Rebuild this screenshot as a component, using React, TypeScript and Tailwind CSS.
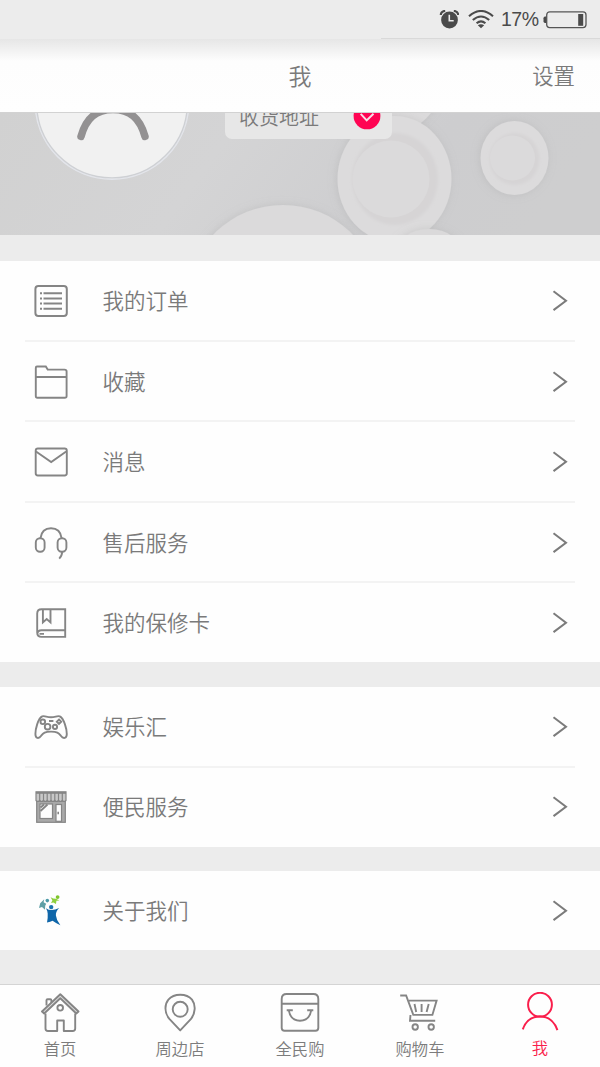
import type { ReactNode } from "react";

const OrderIcon = () => (
  <svg width="36" height="36" viewBox="0 0 36 36" fill="none" stroke="#858585" strokeWidth="2">
    <rect x="2.4" y="2.9" width="31.4" height="30.2" rx="3" />
    <path d="M10.5 10.2H29M10.5 15.4H29M10.5 20.6H29M10.5 25.8H29M7 10.2h2M7 15.4h2M7 20.6h2M7 25.8h2" />
  </svg>
);

const FolderIcon = () => (
  <svg width="36" height="36" viewBox="0 0 36 36" fill="none" stroke="#858585" strokeWidth="1.9">
    <path d="M2.8 32V4Q2.8 2.5 4 2.5H12.8L14.7 5.6H31.5Q33.6 5.6 33.6 7.5V32Q33.6 33.8 31.8 33.8H4.3Q2.8 33.8 2.8 32ZM2.8 13H33.6" />
  </svg>
);

const MailIcon = () => (
  <svg width="36" height="36" viewBox="0 0 36 36" fill="none" stroke="#858585" strokeWidth="1.9">
    <rect x="2.7" y="4.5" width="31.1" height="27" rx="2.2" />
    <path d="M3 7.5L18.2 18L33.2 7.5" />
  </svg>
);

const HeadsetIcon = () => (
  <svg width="36" height="36" viewBox="0 0 36 36" fill="none" stroke="#858585" strokeWidth="1.9">
    <path d="M7.4 13.3C8.4 6.5 12.4 3.3 18 3.3S27.7 6.5 28.7 13.3" />
    <rect x="2.8" y="13.3" width="8.8" height="13.4" rx="4.2" />
    <rect x="24.6" y="13.3" width="8.8" height="13.4" rx="4.2" />
    <path d="M29.2 26.7Q29 31 26.2 33.6" />
  </svg>
);

const BookIcon = () => (
  <svg width="36" height="36" viewBox="0 0 36 36" fill="none" stroke="#858585" strokeWidth="1.9">
    <path d="M32.2 4.2V31.9H8.5Q4.2 31.7 4.2 27.5V8.5Q4.2 4.2 8.5 4.2ZM32.2 25.3H8.5Q4.6 25.3 4.4 29M9.9 4.5V17.4L13.7 14L17.5 17.4V4.5M6.5 28.9H11" />
  </svg>
);

const GamepadIcon = () => (
  <svg width="36" height="36" viewBox="0 0 36 36" fill="none" stroke="#858585" strokeWidth="1.9">
    <path d="M9.2 7.4C11.5 6.4 13.7 8.3 18 8.3S24.5 6.4 26.8 7.4C31 9.5 33.8 20 33.8 25C33.8 29.5 30.3 30.2 27.8 26.7C25.5 23.7 24.2 22.6 18 22.6S10.5 23.7 8.2 26.7C5.7 30.2 2.4 29.5 2.4 25C2.4 20 5 9.5 9.2 7.4Z" />
    <circle cx="9.8" cy="12.8" r="2.3" />
    <circle cx="14.6" cy="17.7" r="2.8" />
    <circle cx="22" cy="17.9" r="2.1" />
    <path d="M26 10.5l2.2 2.2-2.2 2.2-2.2-2.2ZM16 12h4.4" />
  </svg>
);

const ShopIcon = () => (
  <svg width="36" height="36" viewBox="0 0 36 36" fill="none" stroke="#858585" strokeWidth="1.2">
    <rect x="3.7" y="12" width="28.6" height="21.3" fill="#a9a9a9" />
    <path d="M3 2.8H33V11.5Q31 13.5 29.3 11.5Q27.4 13.5 25.5 11.5Q23.6 13.5 21.8 11.5Q19.9 13.5 18 11.5Q16.1 13.5 14.2 11.5Q12.4 13.5 10.5 11.5Q8.6 13.5 6.7 11.5Q5 13.5 3 11.5Z" fill="#c8c8c8" />
    <path d="M6.7 4V11.5M10.5 4V11.5M14.2 4V11.5M18 4V11.5M21.8 4V11.5M25.5 4V11.5M29.3 4V11.5" />
    <path d="M3 3.8H33" strokeWidth="2" />
    <rect x="7" y="15" width="12.5" height="14.5" fill="#fdfdfd" />
    <rect x="23" y="15.5" width="5.5" height="16.8" fill="#fdfdfd" />
    <path d="M7.5 22L14.5 15.5M7.5 18.5L11 15.5" strokeWidth="1.8" />
    <path d="M25.2 22.8v2.4" strokeWidth="1.6" />
  </svg>
);

const AboutIcon = () => (
  <svg width="36" height="36" viewBox="0 0 36 36">
    <circle cx="18.2" cy="14.1" r="2.2" fill="#1b75ad" />
    <path d="M13 15.2Q18 19 26.2 15Q22.5 18.5 22.9 22.5Q23.4 27.5 27.4 32.2Q22 29.6 19.6 27.7Q17.5 28.6 14 29.5Q15 24 14.7 20.5Q14.4 17.5 13 15.2Z" fill="#0f66a9" />
    <circle cx="14.3" cy="7.6" r="1.8" fill="#4c9aa8" />
    <path d="M11.2 6.2L10.6 9.3L13.2 10.8L12.2 12.8L12 16.7L9 14L6 15L7.2 10.2Z" fill="#5e9fa6" />
    <circle cx="24.6" cy="4.1" r="1.9" fill="#80c62d" />
    <path d="M17.6 4.3L20.2 5.6L23 5.7L26.4 7.4L23.4 7.8L23 11L20.4 9.5L18 9.9L19.4 7.5Z" fill="#8ecf3d" />
  </svg>
);

const HomeIcon = () => (
  <svg width="42" height="42" viewBox="0 0 42 42" fill="none" stroke="#858585" strokeWidth="1.9" strokeLinejoin="round">
    <path d="M7.5 12.4V7.3Q7.5 6.2 8.6 6.2H11.2Q12.4 6.2 12.4 7.3V9.5" />
    <path d="M6.5 20.5V35.5Q6.5 38 9 38H18.2V27.5H24.8V38H33.6Q36.2 38 36.2 35.5V20.5" />
    <path d="M21.3 1.3L39.5 18.5L37.3 20.5L21.3 5.3L5.2 20.5L3 18.5Z" fill="#dedede" />
    <circle cx="21.2" cy="14.8" r="2.8" />
  </svg>
);

const PinIcon = () => (
  <svg width="42" height="42" viewBox="0 0 42 42" fill="none" stroke="#858585" strokeWidth="1.9">
    <path d="M21.2 37.4L10.6 26.2C4.5 19 6.1 10.5 9.4 6.6C15 .1 27.5 .1 33 6.6C37 12 36.5 20 31.8 26.2Z" strokeLinejoin="round" />
    <circle cx="21.2" cy="16.3" r="7.5" />
  </svg>
);

const BagIcon = () => (
  <svg width="42" height="42" viewBox="0 0 42 42" fill="none" stroke="#858585" strokeWidth="1.9">
    <path d="M2.7 10.8V5.9Q2.7 1 7.7 1H34.3Q39.3 1 39.3 5.9V35Q39.3 37.7 36.5 37.7H5.5Q2.7 37.7 2.7 35ZM2.7 10.8H39.3M7.7 17.2H13.8M28.2 17.2H34.3M9.8 17.4C11 24 14.5 27.7 21 27.7S31 24 32.2 17.4" />
  </svg>
);

const CartIcon = () => (
  <svg width="42" height="42" viewBox="0 0 42 42" fill="none" stroke="#858585" strokeWidth="1.9">
    <path d="M1.2 2.5H7.1L14.3 21.9H33.4L37.6 7.6H10M11.5 22L11 27.7H36.2M15.5 11L17.2 19M22.6 11V19M29.7 11L27.6 19" />
    <circle cx="16.2" cy="34" r="2.7" />
    <circle cx="32.2" cy="34" r="2.7" />
  </svg>
);

const MeIcon = () => (
  <svg width="42" height="42" viewBox="0 0 42 42" fill="none" stroke="#fa1e4b" strokeWidth="2">
    <circle cx="21" cy="12.7" r="11.9" />
    <path d="M3.8 37.4C6.4 29.5 12.5 24.6 21 24.6S35.5 29.8 38.4 38.2" />
  </svg>
);

const Chevron = () => (
  <svg width="18" height="24" viewBox="0 0 18 24" fill="none" stroke="#7b7b7b" strokeWidth="2">
    <path d="M2.5 2.3L15 11.7L2.5 21.1" />
  </svg>
);

function Row({ icon, label, divider = false }: { icon: ReactNode; label: string; divider?: boolean }) {
  return (
    <div className={divider ? "relative flex h-[80.5px] items-center pr-[31px] pl-[33px]" : "flex flex-1 items-center pr-[31px] pl-[33px]"}>
      {icon}
      <span className="ml-[33.5px] flex-1 pb-[2px] text-[21.5px] leading-8">{label}</span>
      <Chevron />
      {divider && <div className="absolute right-[25px] bottom-0 left-[25px] h-[2px] bg-[#f3f3f3]" />}
    </div>
  );
}

function Tab({ icon, label, active = false }: { icon: ReactNode; label: string; active?: boolean }) {
  return (
    <div className={active ? "flex flex-1 flex-col items-center pt-[7px] text-[#fa1e4b]" : "flex flex-1 flex-col items-center pt-[8px] text-[#7c7c7c]"}>
      {icon}
      <span className="text-[16.3px] leading-[27px]">{label}</span>
    </div>
  );
}

function StatusBar() {
  return (
    <div className="relative flex h-[39px] items-center bg-[#ececec] pr-[13px] text-[#4a4a4a]">
      <svg className="ml-auto" width="20" height="20" viewBox="0 0 20 20">
        <circle cx="10.5" cy="10" r="8.4" fill="#4a4a4a" />
        <path d="M1.8 5Q2 1.2 6.2 .9M19.2 5Q19 1.2 14.8 .9" fill="none" stroke="#4a4a4a" strokeWidth="2.2" />
        <path d="M10.3 4.8V10.8H14.7" fill="none" stroke="#ececec" strokeWidth="1.6" />
      </svg>
      <svg className="ml-[9px]" width="26" height="20" viewBox="0 0 26 20" fill="none" stroke="#4a4a4a" strokeWidth="2.1">
        <path d="M1 6.2Q13-4.2 25 6.2M4.8 10Q13 3 21.2 10M8.6 13.2Q13 9.4 17.4 13.2" />
        <path d="M9.8 15.3Q13 13.3 16.2 15.3L13 18.3Z" fill="#4a4a4a" stroke="none" />
      </svg>
      <span className="ml-[7px] w-[38px] pt-px font-['Liberation_Sans',sans-serif] text-[19.5px] font-normal tracking-[-0.5px]">17%</span>
      <svg className="ml-[4px]" width="44" height="18" viewBox="0 0 44 18">
        <rect x="3.7" y=".9" width="39.3" height="15.7" rx="3" fill="none" stroke="#555" strokeWidth="1.3" />
        <path d="M3.2 5.5H2Q.5 5.5.5 7.2V10.2Q.5 12 2 12H3.2Z" fill="#4a4a4a" />
        <rect x="35.2" y="3" width="5" height="11.8" fill="#4a4a4a" />
      </svg>
      <div className="absolute right-0 bottom-0 h-[1.5px] w-[219px] bg-[#d9d9d9]" />
    </div>
  );
}

function Hero() {
  return (
    <div className="relative h-[122px] overflow-hidden bg-[#d1d1d2]">
      <svg className="absolute inset-0" width="600" height="122" viewBox="0 0 600 122">
        <defs>
          <linearGradient id="backdrop" x1="0" y1="0" x2="1" y2="0.15">
            <stop offset="0" stopColor="#d1d1d1" />
            <stop offset=".4" stopColor="#d4d4d5" />
            <stop offset=".75" stopColor="#cdcdcf" />
            <stop offset="1" stopColor="#cececf" />
          </linearGradient>
          <filter id="shade" x="-20%" y="-20%" width="140%" height="140%">
            <feDropShadow dx="-1" dy="0" stdDeviation="4" floodColor="#999" floodOpacity=".28" />
          </filter>
          <filter id="soft">
            <feGaussianBlur stdDeviation="1.5" />
          </filter>
        </defs>
        <rect width="600" height="122" fill="url(#backdrop)" />
        <circle cx="376" cy="-45" r="71" fill="#dbdadb" filter="url(#shade)" />
        <ellipse cx="283" cy="182" rx="94" ry="90" fill="#dbdadb" filter="url(#shade)" />
        <ellipse cx="394.5" cy="66" rx="57" ry="63" fill="#dcdbdc" filter="url(#shade)" />
        <ellipse cx="395" cy="66" rx="43" ry="46" fill="#d6d4d5" filter="url(#soft)" />
        <ellipse cx="391" cy="66" rx="38.5" ry="38.5" fill="#dbdadb" />
        <ellipse cx="514.5" cy="45" rx="34" ry="37" fill="#dcdbdc" filter="url(#shade)" />
        <ellipse cx="514.5" cy="46" rx="25" ry="26" fill="#d6d4d5" filter="url(#soft)" />
        <circle cx="512.5" cy="45" r="22.5" fill="#dbdadb" />
        <ellipse cx="429" cy="143" rx="35" ry="27" fill="#dad9da" filter="url(#shade)" />
        <circle cx="112" cy="-10.5" r="76.8" fill="#f1f1f1" stroke="#e3e5eb" strokeWidth="1.5" />
        <circle cx="112" cy="-10.5" r="75.4" fill="none" stroke="#ced0d4" strokeWidth="1.4" />
        <path d="M81 23.5C86 5 96-3.5 113-3.5S140 5 145 23.5" fill="none" stroke="#939192" strokeWidth="7.5" strokeLinecap="round" />
      </svg>
      <div className="relative -mt-[18px] ml-[225px] flex h-[44px] w-[167px] items-center rounded-[7px] bg-[#e7e7e7] pr-[11px] pl-[14px]">
        <span className="pb-px text-[20px] leading-[43px]">收货地址</span>
        <svg className="ml-auto" width="28" height="28" viewBox="0 0 28 28">
          <circle cx="14" cy="12.9" r="13.4" fill="#ff0453" />
          <path d="M7.7 10.8L13.7 17.4L20.5 10.8" fill="none" stroke="#f9dce5" strokeWidth="2" />
        </svg>
      </div>
    </div>
  );
}

export default function App() {
  return (
    <div className="flex h-[1067px] w-[600px] flex-col overflow-hidden bg-[#ececec] font-['Noto_Sans_CJK_SC',sans-serif] font-[350] text-[#7a7a7a]">
      <StatusBar />
      <header className="grid h-[74px] grid-cols-3 items-center border-b border-[#d2d2d2] bg-linear-to-b from-[#e6e6e6] via-[#fdfdfd] via-30% to-[#fefefe] px-[25px]">
        <h1 className="col-start-2 text-center text-[23px]">我</h1>
        <span className="text-right text-[21.4px]">设置</span>
      </header>
      <Hero />
      <section className="mt-[26px] flex h-[401px] flex-col bg-[#fefefe]">
        <Row icon={<OrderIcon />} label="我的订单" divider />
        <Row icon={<FolderIcon />} label="收藏" divider />
        <Row icon={<MailIcon />} label="消息" divider />
        <Row icon={<HeadsetIcon />} label="售后服务" divider />
        <Row icon={<BookIcon />} label="我的保修卡" />
      </section>
      <section className="mt-[25px] flex h-[160px] flex-col bg-[#fefefe]">
        <Row icon={<GamepadIcon />} label="娱乐汇" divider />
        <Row icon={<ShopIcon />} label="便民服务" />
      </section>
      <section className="mt-[24px] flex h-[79px] flex-col bg-[#fefefe]">
        <Row icon={<AboutIcon />} label="关于我们" />
      </section>
      <nav className="mt-auto flex h-[83px] border-t border-[#d4d4d4] bg-[#fefefe]">
        <Tab icon={<HomeIcon />} label="首页" />
        <Tab icon={<PinIcon />} label="周边店" />
        <Tab icon={<BagIcon />} label="全民购" />
        <Tab icon={<CartIcon />} label="购物车" />
        <Tab icon={<MeIcon />} label="我" active />
      </nav>
    </div>
  );
}
